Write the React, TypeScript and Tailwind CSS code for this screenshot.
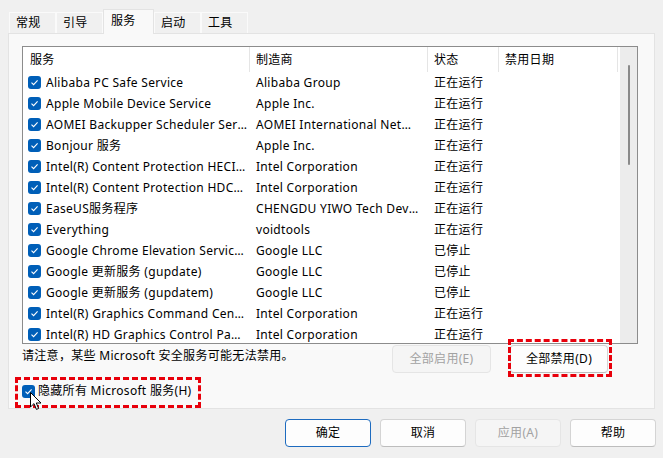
import React from 'react';

type Fila = { nombre: string; fabricante: string; estado: string };

const FILAS: Fila[] = [
  { nombre: 'Alibaba PC Safe Service', fabricante: 'Alibaba Group', estado: '正在运行' },
  { nombre: 'Apple Mobile Device Service', fabricante: 'Apple Inc.', estado: '正在运行' },
  { nombre: 'AOMEI Backupper Scheduler Service', fabricante: 'AOMEI International Network Limited', estado: '正在运行' },
  { nombre: 'Bonjour 服务', fabricante: 'Apple Inc.', estado: '正在运行' },
  { nombre: 'Intel(R) Content Protection HECI Service', fabricante: 'Intel Corporation', estado: '正在运行' },
  { nombre: 'Intel(R) Content Protection HDCP Service', fabricante: 'Intel Corporation', estado: '正在运行' },
  { nombre: 'EaseUS服务程序', fabricante: 'CHENGDU YIWO Tech Development Co., Ltd', estado: '正在运行' },
  { nombre: 'Everything', fabricante: 'voidtools', estado: '正在运行' },
  { nombre: 'Google Chrome Elevation Service (GoogleChromeElevationService)', fabricante: 'Google LLC', estado: '已停止' },
  { nombre: 'Google 更新服务 (gupdate)', fabricante: 'Google LLC', estado: '已停止' },
  { nombre: 'Google 更新服务 (gupdatem)', fabricante: 'Google LLC', estado: '已停止' },
  { nombre: 'Intel(R) Graphics Command Center Service', fabricante: 'Intel Corporation', estado: '正在运行' },
  { nombre: 'Intel(R) HD Graphics Control Panel Service', fabricante: 'Intel Corporation', estado: '正在运行' },
];

const TABS = ['常规', '引导', '服务', '启动', '工具'];

function Casilla() {
  return (
    <span className="flex h-[13px] w-[13px] shrink-0 items-center justify-center rounded-[3px] bg-[#005fb8]">
      <svg width="9" height="9" viewBox="0 0 9 9" fill="none">
        <path d="M1.5 4.6 L3.6 6.7 L7.6 2.4" stroke="#fff" strokeWidth="1.1" />
      </svg>
    </span>
  );
}

function Boton({
  children,
  ancho,
  deshabilitado,
  principal,
}: {
  children: React.ReactNode;
  ancho: string;
  deshabilitado?: boolean;
  principal?: boolean;
}) {
  if (deshabilitado) {
    return (
      <div className={`flex h-[28px] ${ancho} items-center justify-center rounded-[4px] border border-[#e5e5e5] bg-[#f5f5f5] text-[#a2a2a2]`}>
        {children}
      </div>
    );
  }
  return (
    <div
      className={`flex h-[28px] ${ancho} items-center justify-center rounded-[4px] border bg-[#fdfdfd] text-black ${
        principal ? 'border-[#1d6bbf]' : 'border-[#d4d4d4] border-b-[#bdbdbd]'
      }`}
    >
      {children}
    </div>
  );
}

export default function App() {
  return (
    <div
      className="relative flex h-[458px] w-[663px] flex-col overflow-hidden bg-[#f0f0f0] text-[12px] tracking-[0.3px] text-black"
      style={{ fontFamily: '"Noto Sans", "Noto Sans CJK SC", sans-serif' }}
    >
      {/* pestañas */}
      <div className="flex h-[33px] items-end pl-[9px]">
        {TABS.map((t) =>
          t === '服务' ? (
            <div
              key={t}
              className="relative z-10 -mb-px flex h-[25px] w-[51px] items-start border border-b-0 border-[#e3e3e3] bg-[#f9f9f9] pl-[7px] pt-[3px] leading-[16px]"
            >
              {t}
            </div>
          ) : (
            <div
              key={t}
              className="flex h-[21px] w-[47px] items-start border border-b-0 border-[#fafafa] bg-[#f0f0f0] pl-[6px] pt-[2px] leading-[16px]"
            >
              {t}
            </div>
          )
        )}
      </div>

      {/* panel */}
      <div className="mx-[8px] h-[376px] border border-[#e3e3e3] bg-[#f9f9f9] px-[13px] pt-[12px]">
        <div className="flex h-[298px] w-[616px] border border-[#8c8c8c] bg-white">
          <div className="flex-1 overflow-hidden">
            {/* cabecera */}
            <div className="flex h-[25px] items-center">
              <div className="flex h-full w-[227px] items-center border-r border-[#e5e5e5] pl-[7px]">服务</div>
              <div className="flex h-full w-[178px] items-center border-r border-[#e5e5e5] pl-[6px]">制造商</div>
              <div className="flex h-full w-[71px] items-center border-r border-[#e5e5e5] pl-[6px]">状态</div>
              <div className="flex h-full w-[119px] items-center border-r border-[#e5e5e5] pl-[6px]">禁用日期</div>
            </div>
            {FILAS.map((f) => (
              <div key={f.nombre} className="flex h-[21px] items-center">
                <div className="flex w-[227px] items-center gap-[5px] pl-[5px] pr-[2px]">
                  <Casilla />
                  <span className="truncate">{f.nombre}</span>
                </div>
                <div className="w-[178px] truncate pl-[6px] pr-[8px]">{f.fabricante}</div>
                <div className="w-[71px] pl-[6px]">{f.estado}</div>
              </div>
            ))}
          </div>
          {/* barra de desplazamiento */}
          <div className="flex w-[17px] shrink-0 justify-center bg-[#ececec] pt-[18px]">
            <div className="h-[100px] w-[2px] rounded-full bg-[#8a8a8a]" />
          </div>
        </div>

        <div className="mt-[1px] flex w-[616px]">
          <div className="mt-[3px] leading-[16px]">请注意，某些 Microsoft 安全服务可能无法禁用。</div>
          <div className="ml-auto mr-[30px] flex gap-[19px]">
            <Boton ancho="w-[99px]" deshabilitado>
              全部启用(E)
            </Boton>
            <Boton ancho="w-[98px]">全部禁用(D)</Boton>
          </div>
        </div>

        <div className="mt-[10px] flex h-[16px] items-center gap-[3px]">
          <Casilla />
          <span className="leading-[16px]">隐藏所有 Microsoft 服务(H)</span>
        </div>
      </div>

      {/* botones inferiores */}
      <div className="mt-[10px] flex justify-end gap-[9px] pr-[7px]">
        <Boton ancho="w-[86px]" principal>
          确定
        </Boton>
        <Boton ancho="w-[86px]">取消</Boton>
        <Boton ancho="w-[86px]" deshabilitado>
          应用(A)
        </Boton>
        <Boton ancho="w-[86px]">帮助</Boton>
      </div>

      {/* marcas rojas */}
      <div className="absolute left-[508px] top-[339px] h-[38px] w-[104px] border-[3px] border-dashed border-[#e8000b]" />
      <div className="absolute left-[15px] top-[377px] h-[31px] w-[186px] border-[3px] border-dashed border-[#e8000b]" />

      {/* cursor */}
      <svg className="absolute left-[30px] top-[392px]" width="12" height="19" viewBox="0 0 12 19">
        <path d="M0.5 0.5 L0.5 15 L4 11.6 L6.4 17.4 L8.6 16.5 L6.3 11 L11 11 Z" fill="#fff" stroke="#000" strokeWidth="1" />
      </svg>
    </div>
  );
}
